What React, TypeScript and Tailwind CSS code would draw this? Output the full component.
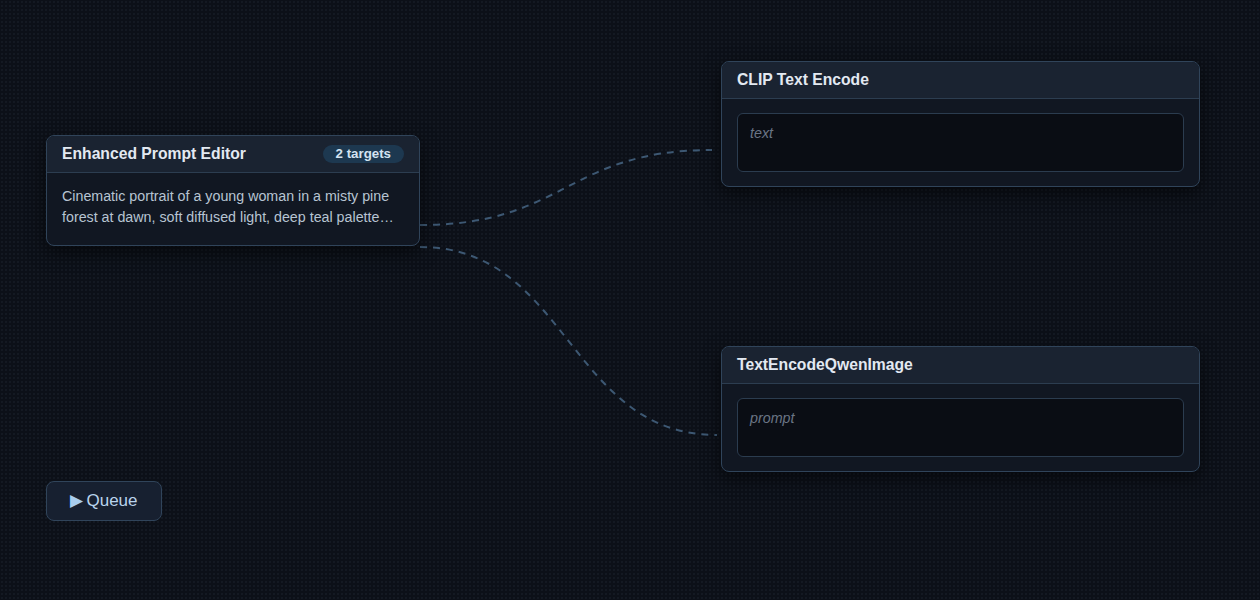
import React from "react";

type Wire = { from: [number, number]; to: [number, number] };

const wires: Wire[] = [
  { from: [420, 225], to: [712, 150] },
  { from: [420, 247], to: [717, 435] },
];

function wirePath({ from, to }: Wire) {
  const [x1, y1] = from;
  const [x2, y2] = to;
  const d = (x2 - x1) * 0.5;
  return `M ${x1} ${y1} C ${x1 + d} ${y1}, ${x2 - d} ${y2}, ${x2} ${y2}`;
}

function NodeHeader({ title, children }: { title: string; children?: React.ReactNode }) {
  return (
    <div className="flex h-[37px] items-center justify-between border-b border-[#2c3d50] bg-[#1a2331] px-[15px]">
      <span className="text-[15.7px] font-bold text-[#e3e9f1]">{title}</span>
      {children}
    </div>
  );
}

function EncoderNode({ title, placeholder, className }: { title: string; placeholder: string; className: string }) {
  return (
    <div
      className={`absolute w-[479px] overflow-hidden rounded-lg border border-[#30445a] bg-[#111722] shadow-[0_6px_18px_rgba(0,0,0,0.55)] ${className}`}
    >
      <NodeHeader title={title} />
      <div className="px-[15px] pt-[14px] pb-[14px]">
        <div className="h-[59px] rounded-md border border-[#2b3c4f] bg-[#0a0d14] px-3 pt-[9px] text-[14.3px] italic text-[#6a7585]">
          {placeholder}
        </div>
      </div>
    </div>
  );
}

export default function App() {
  return (
    <div
      className="relative h-[600px] w-[1260px] overflow-hidden bg-[#0c1018] bg-[radial-gradient(circle,rgba(120,140,170,0.07)_1px,transparent_1.2px)] bg-[length:4px_4px]"
      style={{ fontFamily: '"Liberation Sans", Arial, sans-serif' }}
    >
      <svg className="absolute inset-0" width={1260} height={600}>
        {wires.map((w, i) => (
          <path
            key={i}
            d={wirePath(w)}
            fill="none"
            stroke="#3d5873"
            strokeWidth={2}
            strokeDasharray="7 6"
          />
        ))}
      </svg>

      <div className="absolute left-[46px] top-[135px] w-[374px] overflow-hidden rounded-lg border border-[#30445a] bg-[#111722] shadow-[0_6px_18px_rgba(0,0,0,0.55)]">
        <NodeHeader title="Enhanced Prompt Editor">
          <span className="rounded-full bg-[#1d3850] px-[13px] py-[1px] text-[13.3px] font-bold leading-[16px] text-[#d4e3f1]">
            2 targets
          </span>
        </NodeHeader>
        <div className="px-[15px] pt-[13px] pb-[17px] text-[14.25px] leading-[21px] text-[#b7c4d2]">
          <p>Cinematic portrait of a young woman in a misty pine</p>
          <p>forest at dawn, soft diffused light, deep teal palette…</p>
        </div>
      </div>

      <EncoderNode title="CLIP Text Encode" placeholder="text" className="left-[721px] top-[61px]" />
      <EncoderNode title="TextEncodeQwenImage" placeholder="prompt" className="left-[721px] top-[346px]" />

      <button className="absolute left-[46px] top-[481px] flex h-[40px] w-[116px] items-center justify-center gap-[3px] rounded-lg border border-[#30445a] bg-[#172030] text-[17px] text-[#b9d3ec]">
        <span className="text-[17px] text-[#a9cdee]">▶</span>
        <span>Queue</span>
      </button>
    </div>
  );
}
